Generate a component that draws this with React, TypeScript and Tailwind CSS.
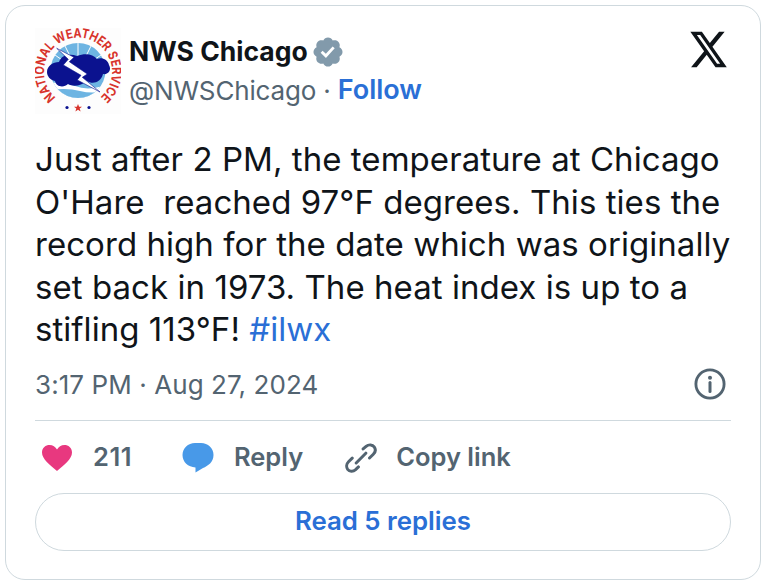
import React from "react";

function Logo() {
  return (
    <svg width="86" height="86" viewBox="0 0 86 86" className="shrink-0">
      <rect width="86" height="86" fill="#fdfdfd" />
      <defs>
        <path id="ring" d="M 21 69.5 A 34 34 0 1 1 65 69.5" fill="none" />
        <clipPath id="disc"><circle cx="43" cy="42.5" r="27.5" /></clipPath>
      </defs>
      <text fill="#d8342c" fontSize="13" fontWeight="700" fontFamily="Inter, sans-serif">
        <textPath href="#ring" startOffset="0" textLength="165" lengthAdjust="spacingAndGlyphs">NATIONAL WEATHER SERVICE</textPath>
      </text>
      <circle cx="43" cy="42.5" r="27.5" fill="#6db4e2" />
      <g clipPath="url(#disc)">
        <path d="M43 15V30M30 18L36 30M56 18L50 30M20 27L30 34M66 27L56 34" stroke="#fff" strokeWidth="1" />
        <path d="M10 56Q25 52 40 58T76 55V74H10Z" fill="#fff" />
        <path d="M10 63Q30 59 45 63T76 61V74H10Z" fill="#6db4e2" />
      </g>
      <path d="M12 44C12 38 18 34 24 34C26 27 35 25 42 28C50 25 58 26 62 31C67 29 73 32 74 37C77 42 73 47 68 46C66 54 58 57 52 53C46 58 38 59 33 56C29 60 21 59 20 53C15 52 12 48 12 44Z" fill="#0b128f" />
      <polygon points="21.7,20.3 39,29.3 34.3,33.7 52.3,46 47.3,49.3 65,64 42.3,52 46,47.3 28.3,37 33.3,31.3" fill="#fff" stroke="#0b128f" strokeWidth="0.6" />
      <polygon points="43,76 44.1,78.8 47,78.8 44.7,80.6 45.6,83.5 43,81.7 40.4,83.5 41.3,80.6 39,78.8 41.9,78.8" fill="#d8342c" />
      <circle cx="32" cy="79.5" r="1.6" fill="#0b128f" />
      <circle cx="54" cy="79.5" r="1.6" fill="#0b128f" />
    </svg>
  );
}

function Verified() {
  return (
    <svg width="34" height="34" viewBox="0 0 22 22" className="shrink-0">
      <path
        fill="#829aab"
        d="M20.396 11c-.018-.646-.215-1.275-.57-1.816-.354-.54-.852-.972-1.438-1.246.223-.607.27-1.264.14-1.897-.131-.634-.437-1.218-.882-1.687-.47-.445-1.053-.75-1.687-.882-.633-.13-1.29-.083-1.897.14-.273-.587-.704-1.086-1.245-1.44S11.647 1.62 11 1.604c-.646.017-1.273.213-1.813.568s-.969.854-1.24 1.44c-.608-.223-1.267-.272-1.902-.14-.635.13-1.22.436-1.69.882-.445.47-.749 1.055-.878 1.688-.13.633-.08 1.29.144 1.896-.587.274-1.087.705-1.443 1.245-.356.54-.555 1.17-.574 1.817.02.647.218 1.276.574 1.817.356.54.856.972 1.443 1.245-.224.606-.274 1.263-.144 1.896.13.634.433 1.218.877 1.688.47.443 1.054.747 1.687.878.633.132 1.29.084 1.897-.136.274.586.705 1.084 1.246 1.439.54.354 1.17.551 1.816.569.647-.016 1.276-.213 1.817-.567s.972-.854 1.245-1.44c.604.239 1.266.296 1.903.164.636-.132 1.22-.447 1.68-.907.46-.46.776-1.044.908-1.681s.075-1.299-.165-1.903c.586-.274 1.084-.705 1.439-1.246.354-.54.551-1.17.569-1.816z"
      />
      <path fill="#fff" d="M9.662 14.85l-3.429-3.428 1.293-1.302 2.072 2.072 4.4-4.794 1.347 1.246z" />
    </svg>
  );
}

export default function App() {
  return (
    <div className="w-[764px] h-[586px] bg-white pl-[5px] pt-[5px] font-['Inter','Liberation_Sans',sans-serif]">
      <div className="w-[756px] h-[575px] border border-[#cfd9de] rounded-[20px] px-[29px] pt-[17px] flex flex-col">
        <div className="flex items-start h-[86px] pt-[11px]">
          <div className="-mt-[6px]">
            <Logo />
          </div>
          <div className="ml-[8px] flex flex-col grow">
            <div className="flex items-center h-[36px]">
              <span className="text-[26.5px] font-bold text-[#0f1419]">NWS Chicago</span>
              <span className="ml-[3px] flex"><Verified /></span>
            </div>
            <div className="flex items-center h-[41px] text-[26px]">
              <span className="text-[#536471] tracking-[-0.15px]">@NWSChicago</span>
              <span className="text-[#536471] mx-[7px]">·</span>
              <span className="text-[27px] font-semibold text-[#2a6fd6]">Follow</span>
            </div>
          </div>
          <svg width="41" height="38" viewBox="0 0 24 22.5" className="mr-[2px] shrink-0 -mt-[4px]">
            <path fill="#0f1419" d="M18.244 0h3.308l-7.227 8.26 8.502 11.24H16.17l-5.214-6.817L4.99 19.5H1.68l7.73-8.835L1.254 0H8.08l4.713 6.231zm-1.161 17.52h1.833L7.084 1.876H5.117z" transform="translate(0 1) scale(1 1.08)" />
          </svg>
        </div>
        <div className="mt-[29px] text-[33px] leading-[42.5px] text-[#0f1419] tracking-[0.05px] whitespace-pre">
          {"Just after 2 PM, the temperature at Chicago\nO'Hare  reached 97°F degrees. This ties the\nrecord high for the date which was originally\nset back in 1973. The heat index is up to a\nstifling 113°F! "}
          <span className="text-[#2a6fd6]">#ilwx</span>
        </div>
        <div className="mt-[16px] flex items-center justify-between h-[36px]">
          <span className="text-[26px] text-[#536471] tracking-[0.08px]">3:17 PM · Aug 27, 2024</span>
          <svg width="36" height="36" viewBox="0 0 24 24" fill="none" className="mr-[3px] -mt-[1px]">
            <circle cx="12" cy="12" r="9.4" stroke="#536471" strokeWidth="1.9" />
            <circle cx="12" cy="7.8" r="1.35" fill="#536471" />
            <path d="M12 11v6" stroke="#536471" strokeWidth="2" strokeLinecap="round" />
          </svg>
        </div>
        <div className="mt-[17px] h-px bg-[#cfd9de]" />
        <div className="mt-[15px] flex items-center h-[44px] text-[25.5px] font-semibold text-[#536471]">
          <svg width="32" height="28" viewBox="0 0 32 28" className="ml-[6px]">
            <path fill="#e8387f" d="M16 27C9 21 1 15 1 8.5 1 3.5 4.8 1 8.5 1 11.8 1 14.5 2.8 16 5.5 17.5 2.8 20.2 1 23.5 1 27.2 1 31 3.5 31 8.5 31 15 23 21 16 27Z" />
          </svg>
          <span className="ml-[20px] tracking-[0.5px]">211</span>
          <svg width="32" height="31" viewBox="0 0 32 31" className="ml-[50px]">
            <path fill="#4899e8" d="M13 1H19C26 1 31.5 6 31.5 13 31.5 20 26 24 21 26L13.5 30.5V25.5C6 25 .5 20 .5 13 .5 6 6 1 13 1Z" />
          </svg>
          <span className="ml-[20px]">Reply</span>
          <svg width="34" height="34" viewBox="0 0 24 24" fill="none" className="ml-[41px]">
            <path d="M13.5 5.6 15.6 3.8C17.5 2.2 20.2 2.5 21.3 4.1 22.4 5.7 22.2 7.9 20.7 9.4L18 12M10.2 18.3 8.2 20.2C6.4 21.8 3.8 21.6 2.6 20 1.5 18.4 1.7 16.1 3.2 14.6L5.8 12.1M8.6 15.5 15.4 8.6" stroke="#536471" strokeWidth="2.1" strokeLinecap="round" />
          </svg>
          <span className="ml-[18px]">Copy link</span>
        </div>
        <div className="mt-[13px] h-[58px] border border-[#cfd9de] rounded-full flex items-center justify-center text-[25.8px] font-semibold text-[#2a6fd6]">
          Read 5 replies
        </div>
      </div>
    </div>
  );
}
